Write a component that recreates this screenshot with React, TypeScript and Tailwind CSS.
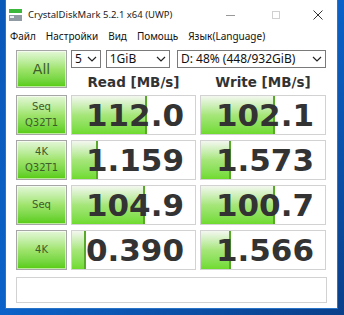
import React from 'react';

type Row = { label: string[]; read: string; readPct: number; write: string; writePct: number };

const rows: Row[] = [
  { label: ['Seq', 'Q32T1'], read: '112.0', readPct: 61, write: '102.1', writePct: 60 },
  { label: ['4K', 'Q32T1'], read: '1.159', readPct: 21, write: '1.573', writePct: 24 },
  { label: ['Seq'], read: '104.9', readPct: 59, write: '100.7', writePct: 60 },
  { label: ['4K'], read: '0.390', readPct: 11, write: '1.566', writePct: 24 },
];

const ui = { fontFamily: '"Noto Sans", "Open Sans", sans-serif' };
const mark = { fontFamily: '"DejaVu Sans", Verdana, sans-serif' };

const GreenButton = ({ lines, big }: { lines: string[]; big?: boolean }) => (
  <div
    className="h-full border border-[#a6a6a6] bg-gradient-to-b from-[#e4f7d8] via-[#9fe46c] to-[#55cc05] shadow-[inset_0_0_0_1px_rgba(255,255,255,0.6)] flex flex-col items-center justify-center text-[#3d5c2b]"
    style={mark}
  >
    {lines.map((l) => (
      <span key={l} className={big ? 'text-[14px] leading-none' : 'text-[10px] leading-[16px]'}>
        {l}
      </span>
    ))}
  </div>
);

const Cell = ({ value, pct }: { value: string; pct: number }) => (
  <div className="relative h-full border border-[#d2d2d2] bg-white overflow-hidden">
    <div
      className="absolute left-0 top-0 bottom-0 bg-gradient-to-b from-[#f3f7f0] via-[#a6e67a] to-[#6fdb2c] border-r-2 border-[#58a82a]"
      style={{ width: `${pct}%` }}
    />
    <div
      className="relative h-full flex items-center justify-end pr-[11px] text-[31px] font-bold text-[#333333] leading-none"
      style={mark}
    >
      {value}
    </div>
  </div>
);

const Select = ({ text, className }: { text: string; className: string }) => (
  <div
    className={`h-[18px] border border-[#7a7a7a] bg-white flex items-center justify-between pl-[3px] pr-[3px] text-[12px] text-[#111] ${className}`}
    style={ui}
  >
    <span>{text}</span>
    <svg width="10" height="6" viewBox="0 0 10 6">
      <path d="M1 1l4 4 4-4" fill="none" stroke="#222" strokeWidth="1.2" />
    </svg>
  </div>
);

const App: React.FC = () => {
  return (
    <div className="w-[344px] h-[315px] bg-gradient-to-br from-[#0a58b8] via-[#0b62c8] to-[#0a3f8a] pl-[5px] pr-[6px] pb-[6px] overflow-hidden">
      <div className="h-full bg-white border-x border-b border-[#2a74c8] flex flex-col">
        {/* Title bar */}
        <div className="h-[30px] flex items-center pl-[2px]" style={ui}>
          <svg width="13" height="12" viewBox="0 0 13 12" className="ml-[1px] mr-[6px]">
            <rect x="0" y="0" width="13" height="4" fill="#3bb83b" />
            <rect x="0" y="6" width="13" height="6" fill="#8f9aa3" />
            <rect x="1" y="7" width="4" height="2" fill="#e8eef2" />
          </svg>
          <span className="text-[9.5px] text-[#222]">CrystalDiskMark 5.2.1 x64 (UWP)</span>
          <div className="ml-auto flex items-center">
            <div className="w-[46px] flex justify-center">
              <div className="w-[9px] h-px bg-[#999]" />
            </div>
            <div className="w-[46px] flex justify-center">
              <div className="w-[8px] h-[8px] border border-[#d0d0d0]" />
            </div>
            <div className="w-[38px] flex justify-center">
              <svg width="10" height="10" viewBox="0 0 10 10">
                <path d="M0.5 0.5l9 9M9.5 0.5l-9 9" stroke="#333" strokeWidth="1" />
              </svg>
            </div>
          </div>
        </div>

        {/* Menu */}
        <div className="h-[13px] flex items-center text-[10px] text-[#111] pl-[4px] gap-[10px]" style={ui}>
          <span>Файл</span>
          <span>Настройки</span>
          <span>Вид</span>
          <span>Помощь</span>
          <span>Язык(Language)</span>
        </div>

        {/* Body */}
        <div className="pl-[10px] pt-[7px] flex flex-col">
          <div className="grid grid-cols-[51px_125px_126px] gap-x-[4px] grid-rows-[40px_40px_40px_40px_40px] gap-y-[5px]">
            <div className="h-[38px]">
              <GreenButton lines={['All']} big />
            </div>
            <div className="col-span-2 flex flex-col">
              <div className="flex gap-[5px]">
                <Select text="5" className="w-[30px]" />
                <Select text="1GiB" className="w-[65px]" />
                <Select text="D: 48% (448/932GiB)" className="w-[151px] ml-[2px]" />
              </div>
              <div className="flex gap-[4px] mt-[8px] text-[13.5px] font-bold text-[#333] leading-none" style={mark}>
                <div className="w-[125px] text-center">Read [MB/s]</div>
                <div className="w-[126px] text-center">Write [MB/s]</div>
              </div>
            </div>
            {rows.map((r) => (
              <React.Fragment key={r.read}>
                <GreenButton lines={r.label} />
                <Cell value={r.read} pct={r.readPct} />
                <Cell value={r.write} pct={r.writePct} />
              </React.Fragment>
            ))}
          </div>
          <div className="mt-[7px] w-[311px] h-[26px] border border-[#d2d2d2] bg-white" />
        </div>
      </div>
    </div>
  );
};

export default App;
